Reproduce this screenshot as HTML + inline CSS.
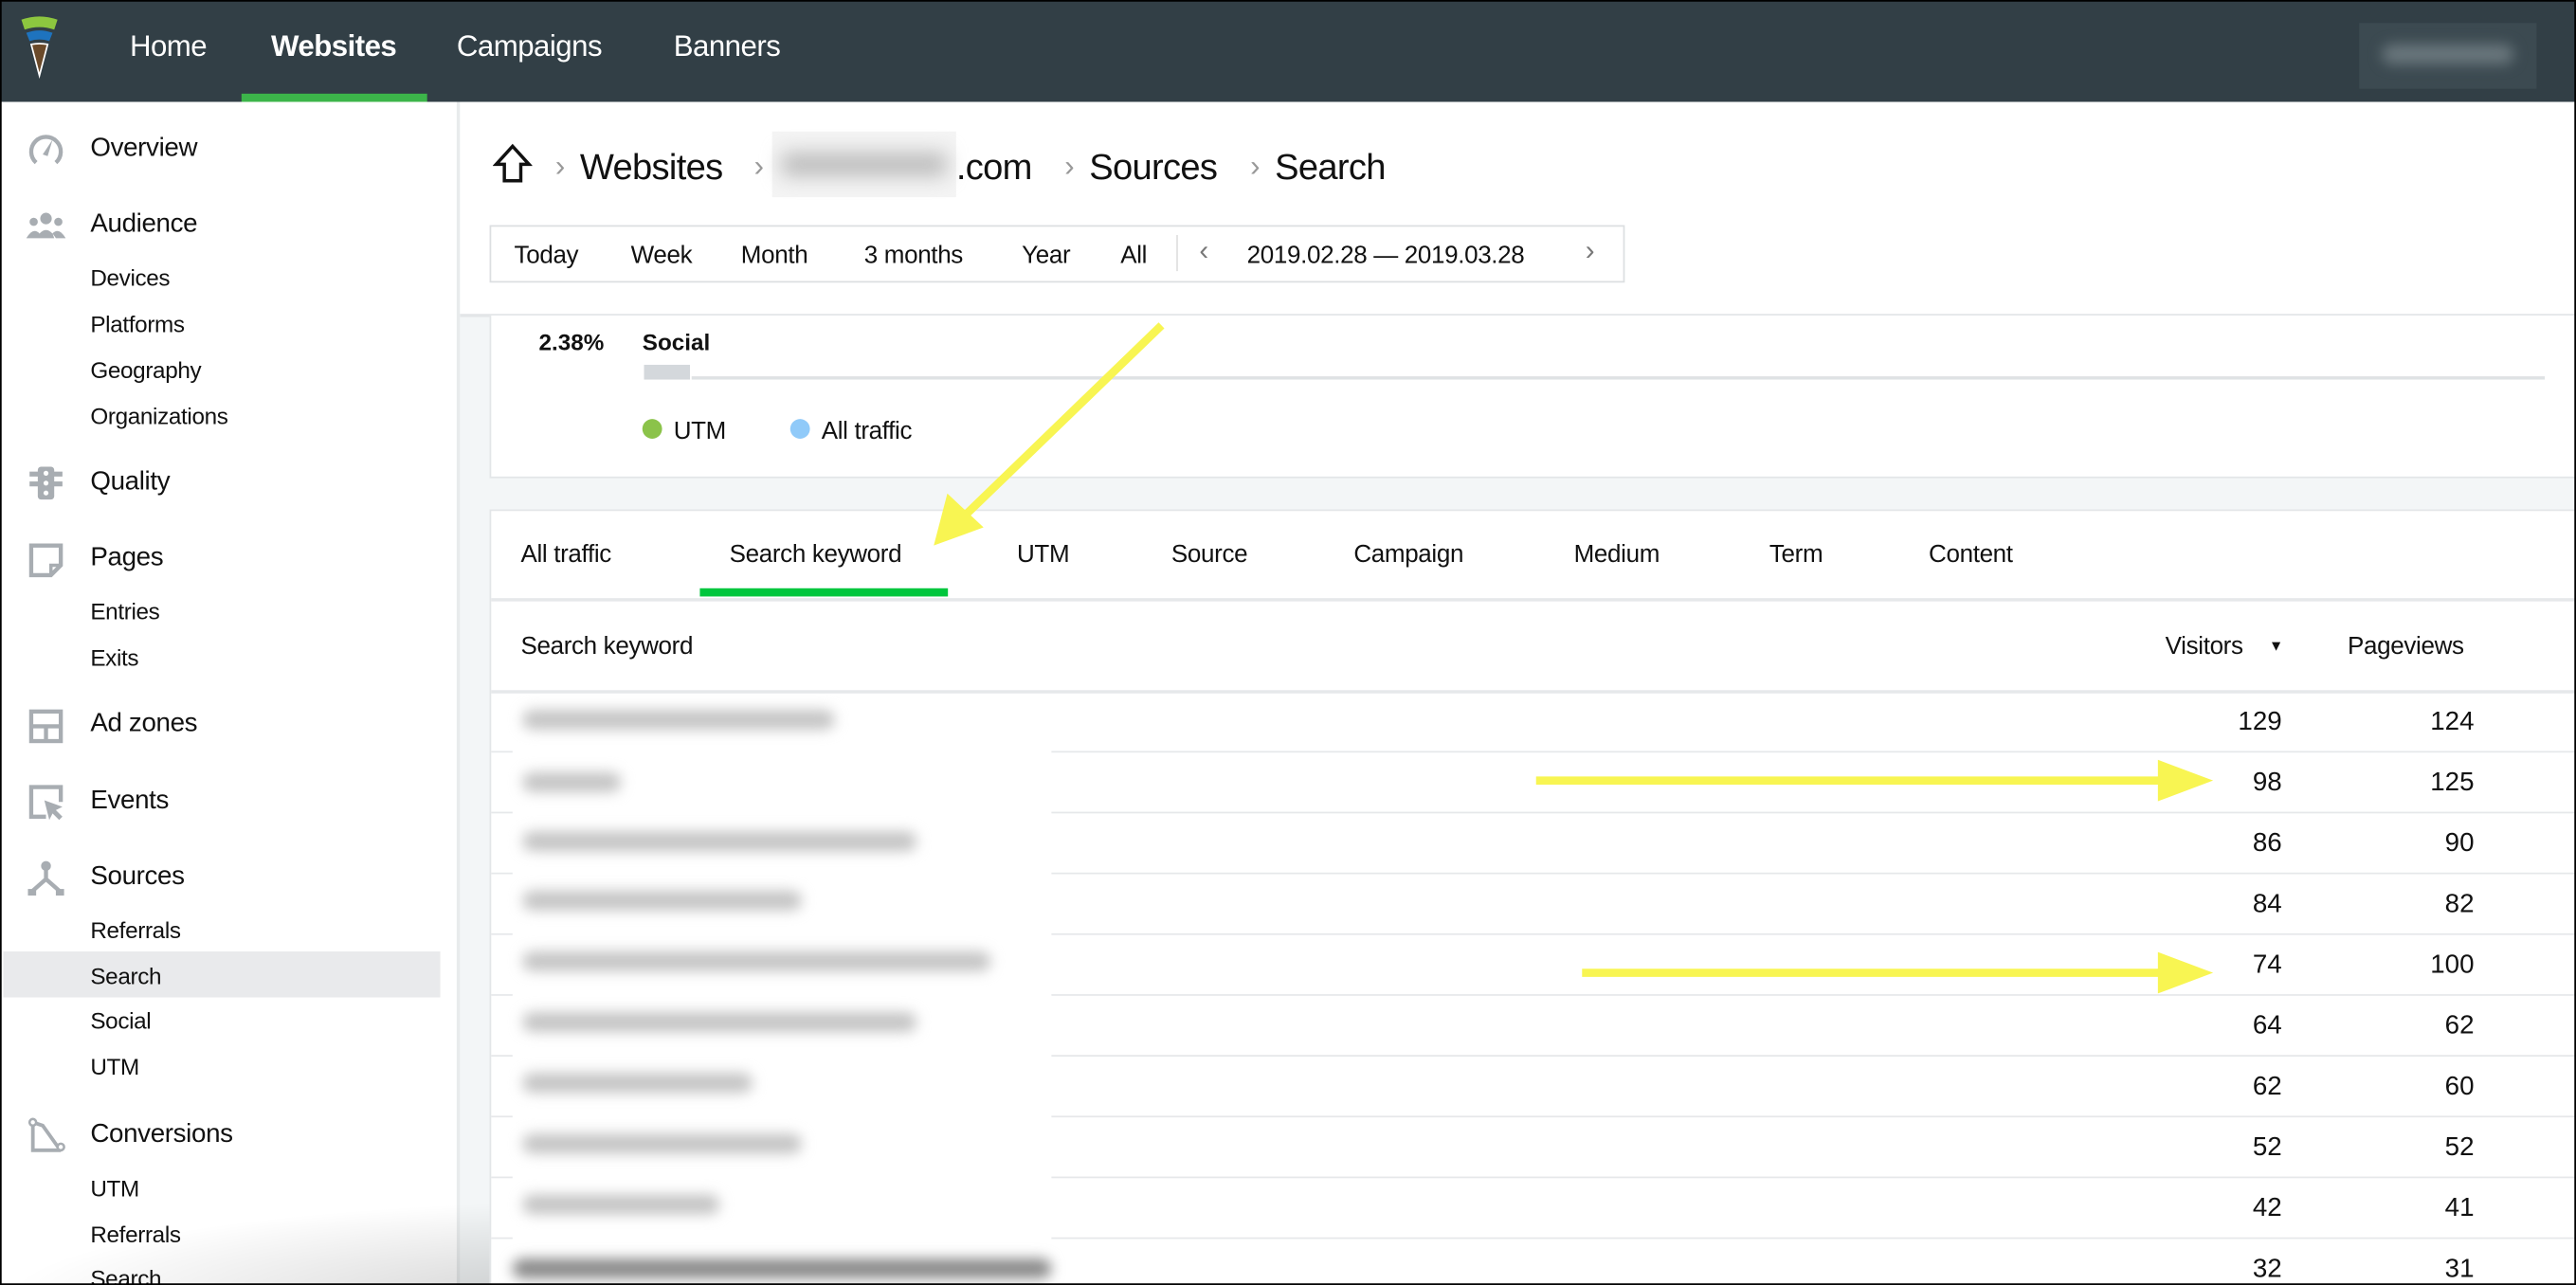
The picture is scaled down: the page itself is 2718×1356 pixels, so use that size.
<!DOCTYPE html>
<html><head><meta charset="utf-8">
<style>
html,body{margin:0;padding:0;width:2718px;height:1356px;overflow:hidden;background:#000;}
#w{position:absolute;left:0;top:0;width:1568px;height:782px;transform:scale(1.73342,1.7340);transform-origin:0 0;background:#f3f6f7;font-family:"Liberation Sans",sans-serif;color:#111;overflow:hidden;}
.a{position:absolute;white-space:nowrap;}
.hd{left:0;top:0;width:1568px;height:62px;background:#323f46;}
.nav{top:18px;font-size:18px;color:#fff;letter-spacing:-0.3px;}
.side{left:0;top:62px;width:278px;height:720px;background:#fff;border-right:2px solid #e8ebec;}
.m{font-size:16px;left:55px;letter-spacing:-0.2px;margin-top:1px;}
.s{font-size:14px;left:55px;letter-spacing:-0.2px;margin-top:1px;}
.ic{left:16px;width:24px;height:24px;}
.top{left:280px;top:62px;width:1288px;height:129px;background:#fff;border-bottom:2px solid #e3e6e8;}
.card{background:#fff;border:1px solid #e3e6e8;}
.t15{font-size:15px;letter-spacing:-0.2px;margin-top:1px;}
.row{left:299px;width:1269px;height:1px;background:#e6e8ea;}
.num{font-size:16px;text-align:right;width:60px;margin-top:1px;}
.bl{background:#c4c4c4;height:12px;border-radius:6px;filter:blur(4px);}
</style></head><body>
<div id="w">
<div class="a hd"></div>
<svg class="a" style="left:10px;top:9px" width="28" height="40" viewBox="0 0 26 40">
<path d="M2 3 Q13 -1 24 3 L22 9 Q13 6 4 9Z" fill="#8dc63f"/>
<path d="M5 11 Q13 8 21 11 L19 16 Q13 14 7 16Z" fill="#1e73be"/>
<path d="M8 18 Q13 17 18 18 L13 37Z" fill="#6b4a2a" stroke="#fff" stroke-width="1"/>
</svg>
<div class="a nav" style="left:79px">Home</div>
<div class="a nav" style="left:165px;font-weight:bold">Websites</div>
<div class="a nav" style="left:278px">Campaigns</div>
<div class="a nav" style="left:410px">Banners</div>
<div class="a" style="left:147px;top:57px;width:113px;height:5px;background:#3cb54a"></div>
<div class="a" style="left:1436px;top:14px;width:108px;height:40px;background:#3c4a51;"><div style="margin:13px 14px;height:12px;background:#6a777d;border-radius:6px;filter:blur(4px)"></div></div>

<div class="a side"></div>
<div class="a" style="left:2px;top:579px;width:266px;height:28px;background:#e9eaec"></div>
<svg class="a ic" style="top:79px" viewBox="0 0 24 24"><path d="M6 20 A9 9 0 1 1 18 20" fill="none" stroke="#a8adb2" stroke-width="2.5"/><path d="M10 15 L16 6 L13 16Z" fill="#a8adb2"/></svg>
<div class="a m" style="top:81px">Overview</div>
<svg class="a ic" style="top:125px" viewBox="0 0 24 24"><circle cx="12" cy="8" r="3.5" fill="#a8adb2"/><circle cx="4.5" cy="10" r="2.5" fill="#a8adb2"/><circle cx="19.5" cy="10" r="2.5" fill="#a8adb2"/><path d="M6 20 Q12 10 18 20Z M0 20 Q4 13 8 17 L7 20Z M24 20 Q20 13 16 17 L17 20Z" fill="#a8adb2"/></svg>
<div class="a m" style="top:127px">Audience</div>
<div class="a s" style="top:160px">Devices</div>
<div class="a s" style="top:188px">Platforms</div>
<div class="a s" style="top:216px">Geography</div>
<div class="a s" style="top:244px">Organizations</div>
<svg class="a ic" style="top:282px" viewBox="0 0 24 24"><rect x="7" y="2" width="10" height="20" rx="2" fill="#a8adb2"/><rect x="2" y="5" width="20" height="3" fill="#a8adb2"/><rect x="2" y="11" width="20" height="3" fill="#a8adb2"/><circle cx="12" cy="6" r="1.5" fill="#fff"/><circle cx="12" cy="12" r="1.5" fill="#fff"/><circle cx="12" cy="18" r="1.5" fill="#fff"/></svg>
<div class="a m" style="top:284px">Quality</div>
<svg class="a ic" style="top:329px" viewBox="0 0 24 24"><path d="M3 3 H21 V15 L15 21 H3Z" fill="none" stroke="#a8adb2" stroke-width="2.5"/><path d="M15 21 V15 H21" fill="none" stroke="#a8adb2" stroke-width="2"/></svg>
<div class="a m" style="top:330px">Pages</div>
<div class="a s" style="top:363px">Entries</div>
<div class="a s" style="top:391px">Exits</div>
<svg class="a ic" style="top:430px" viewBox="0 0 24 24"><rect x="3" y="3" width="18" height="18" fill="none" stroke="#a8adb2" stroke-width="2.5"/><path d="M3 12 H21 M12 12 V21" stroke="#a8adb2" stroke-width="2.5"/></svg>
<div class="a m" style="top:431px">Ad zones</div>
<svg class="a ic" style="top:476px" viewBox="0 0 24 24"><path d="M12 21 H3 V3 H21 V12" fill="none" stroke="#a8adb2" stroke-width="2.5"/><path d="M11 11 L22 15 L18 17 L22 21 L20 23 L16 19 L14 23Z" fill="#a8adb2"/></svg>
<div class="a m" style="top:478px">Events</div>
<svg class="a ic" style="top:522px" viewBox="0 0 24 24"><circle cx="12" cy="5" r="3" fill="#a8adb2"/><path d="M12 7 V13 L4 20 M12 13 L20 20" fill="none" stroke="#a8adb2" stroke-width="2.5"/><rect x="1" y="19" width="5" height="4" fill="#a8adb2"/><rect x="18" y="19" width="5" height="4" fill="#a8adb2"/></svg>
<div class="a m" style="top:524px">Sources</div>
<div class="a s" style="top:557px">Referrals</div>
<div class="a s" style="top:585px">Search</div>
<div class="a s" style="top:612px">Social</div>
<div class="a s" style="top:640px">UTM</div>
<svg class="a ic" style="top:679px" viewBox="0 0 24 24"><path d="M4 4 V21 H20 V20 L10 6 Z" fill="none" stroke="#a8adb2" stroke-width="2.2"/><circle cx="4" cy="4" r="2" fill="#fff" stroke="#a8adb2" stroke-width="1.5"/><circle cx="21" cy="19" r="2" fill="#fff" stroke="#a8adb2" stroke-width="1.5"/></svg>
<div class="a m" style="top:681px">Conversions</div>
<div class="a s" style="top:714px">UTM</div>
<div class="a s" style="top:742px">Referrals</div>
<div class="a s" style="top:769px">Search</div>
<div class="a" style="left:0;top:730px;width:640px;height:60px;background:radial-gradient(ellipse at 60% 100%,rgba(0,0,0,0.18),rgba(0,0,0,0) 70%)"></div>

<div class="a top"></div>
<svg class="a" style="left:300px;top:87px" width="24" height="26" viewBox="0 0 24 26"><path d="M2 13 L12 2 L22 13 H17 V23 H7 V13Z" fill="none" stroke="#111" stroke-width="2"/></svg>
<div class="a" style="left:338px;top:91px;font-size:18px;color:#999">›</div>
<div class="a" style="left:353px;top:89px;font-size:22px;letter-spacing:-0.4px">Websites</div>
<div class="a" style="left:459px;top:91px;font-size:18px;color:#999">›</div>
<div class="a" style="left:470px;top:80px;width:112px;height:40px;background:#f4f4f4"><div style="margin:13px 6px;height:14px;background:#bbb;filter:blur(6px)"></div></div>
<div class="a" style="left:582px;top:89px;font-size:22px;letter-spacing:-0.4px">.com</div>
<div class="a" style="left:648px;top:91px;font-size:18px;color:#999">›</div>
<div class="a" style="left:663px;top:89px;font-size:22px;letter-spacing:-0.4px">Sources</div>
<div class="a" style="left:761px;top:91px;font-size:18px;color:#999">›</div>
<div class="a" style="left:776px;top:89px;font-size:22px;letter-spacing:-0.4px">Search</div>

<div class="a" style="left:298px;top:137px;width:689px;height:33px;border:1px solid #dcdfe1;background:#fff"></div>
<div class="a t15" style="left:313px;top:146px">Today</div>
<div class="a t15" style="left:384px;top:146px">Week</div>
<div class="a t15" style="left:451px;top:146px">Month</div>
<div class="a t15" style="left:526px;top:146px">3 months</div>
<div class="a t15" style="left:622px;top:146px">Year</div>
<div class="a t15" style="left:682px;top:146px">All</div>
<div class="a" style="left:716px;top:143px;width:1px;height:22px;background:#e0e0e0"></div>
<div class="a" style="left:730px;top:143px;font-size:17px;color:#777">‹</div>
<div class="a t15" style="left:759px;top:146px">2019.02.28 — 2019.03.28</div>
<div class="a" style="left:965px;top:143px;font-size:17px;color:#777">›</div>

<div class="a card" style="left:298px;top:192px;width:1270px;height:98px;border-top:none"></div>
<div class="a" style="left:328px;top:200px;font-size:14px;font-weight:bold">2.38%</div>
<div class="a" style="left:391px;top:200px;font-size:14px;font-weight:bold">Social</div>
<div class="a" style="left:392px;top:222px;width:28px;height:9px;background:#d4d8dc"></div>
<div class="a" style="left:421px;top:229px;width:1128px;height:2px;background:#dfe2e4"></div>
<div class="a" style="left:391px;top:255px;width:12px;height:12px;border-radius:6px;background:#8bc34a"></div>
<div class="a t15" style="left:410px;top:253px">UTM</div>
<div class="a" style="left:481px;top:255px;width:12px;height:12px;border-radius:6px;background:#90caf9"></div>
<div class="a t15" style="left:500px;top:253px">All traffic</div>

<div class="a card" style="left:298px;top:310px;width:1270px;height:472px"></div>
<div class="a t15" style="left:317px;top:328px">All traffic</div>
<div class="a t15" style="left:444px;top:328px">Search keyword</div>
<div class="a t15" style="left:619px;top:328px">UTM</div>
<div class="a t15" style="left:713px;top:328px">Source</div>
<div class="a t15" style="left:824px;top:328px">Campaign</div>
<div class="a t15" style="left:958px;top:328px">Medium</div>
<div class="a t15" style="left:1077px;top:328px">Term</div>
<div class="a t15" style="left:1174px;top:328px">Content</div>
<div class="a" style="left:426px;top:358px;width:151px;height:5px;background:#00c63d"></div>
<div class="a row" style="top:364px;height:2px"></div>
<div class="a t15" style="left:317px;top:384px">Search keyword</div>
<div class="a t15" style="left:1318px;top:384px">Visitors</div>
<div class="a" style="left:1381px;top:388px;font-size:9px">▼</div>
<div class="a t15" style="left:1429px;top:384px">Pageviews</div>
<div class="a row" style="top:420px;height:2px"></div>

<div class="a row" style="top:457px"></div><div class="a row" style="top:494px"></div><div class="a row" style="top:531px"></div><div class="a row" style="top:568px"></div><div class="a row" style="top:605px"></div><div class="a row" style="top:642px"></div><div class="a row" style="top:679px"></div><div class="a row" style="top:716px"></div><div class="a row" style="top:753px"></div>

<div class="a num" style="left:1329px;top:430px">129</div><div class="a num" style="left:1446px;top:430px">124</div>
<div class="a num" style="left:1329px;top:467px">98</div><div class="a num" style="left:1446px;top:467px">125</div>
<div class="a num" style="left:1329px;top:504px">86</div><div class="a num" style="left:1446px;top:504px">90</div>
<div class="a num" style="left:1329px;top:541px">84</div><div class="a num" style="left:1446px;top:541px">82</div>
<div class="a num" style="left:1329px;top:578px">74</div><div class="a num" style="left:1446px;top:578px">100</div>
<div class="a num" style="left:1329px;top:615px">64</div><div class="a num" style="left:1446px;top:615px">62</div>
<div class="a num" style="left:1329px;top:652px">62</div><div class="a num" style="left:1446px;top:652px">60</div>
<div class="a num" style="left:1329px;top:689px">52</div><div class="a num" style="left:1446px;top:689px">52</div>
<div class="a num" style="left:1329px;top:726px">42</div><div class="a num" style="left:1446px;top:726px">41</div>
<div class="a num" style="left:1329px;top:763px">32</div><div class="a num" style="left:1446px;top:763px">31</div>

<div class="a" style="left:312px;top:424px;width:328px;height:358px;background:#fff">
<div class="a bl" style="left:6px;top:8px;width:190px"></div>
<div class="a bl" style="left:6px;top:46px;width:60px"></div>
<div class="a bl" style="left:6px;top:82px;width:240px"></div>
<div class="a bl" style="left:6px;top:118px;width:170px"></div>
<div class="a bl" style="left:6px;top:155px;width:285px"></div>
<div class="a bl" style="left:6px;top:192px;width:240px"></div>
<div class="a bl" style="left:6px;top:229px;width:140px"></div>
<div class="a bl" style="left:6px;top:266px;width:170px"></div>
<div class="a bl" style="left:6px;top:303px;width:120px"></div>
<div class="a bl" style="left:0;top:342px;width:328px;background:#888"></div>
</div>

<svg class="a" style="left:0;top:0" width="1568" height="782">
<g stroke="#f8f552" stroke-width="5" fill="#f8f552">
<line x1="707" y1="198" x2="585" y2="316"/>
<path d="M572 328 L578 305 L594 320Z"/>
<line x1="935" y1="475" x2="1318" y2="475"/>
<path d="M1340 475 L1316 466 L1316 484Z"/>
<line x1="963" y1="592" x2="1318" y2="592"/>
<path d="M1340 592 L1316 583 L1316 601Z"/>
</g>
</svg>
<div class="a" style="left:0;top:0;width:1566px;height:780px;border:1px solid #000"></div>
</div>
</body></html>
